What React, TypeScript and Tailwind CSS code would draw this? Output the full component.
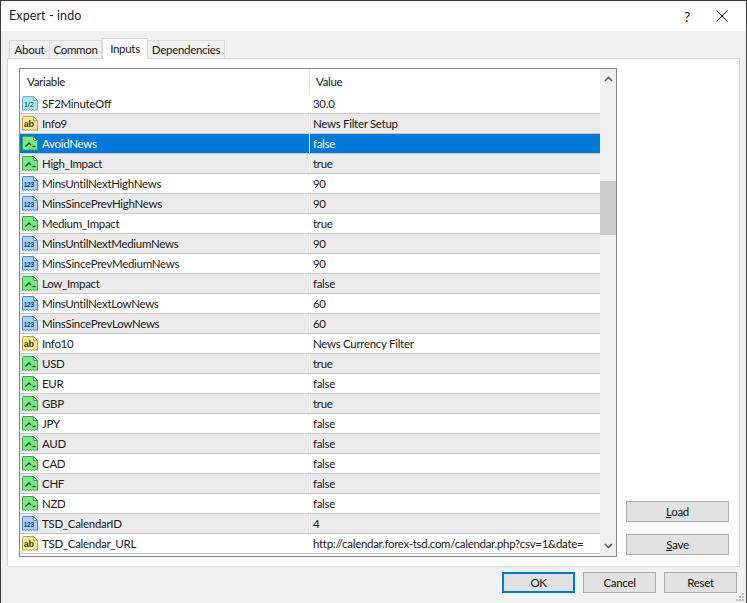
const rows: [string, string, string][] = [
  ['half', 'SF2MinuteOff', '30.0'],
  ['ab', 'Info9', 'News Filter Setup'],
  ['bool', 'AvoidNews', 'false'],
  ['bool', 'High_Impact', 'true'],
  ['num', 'MinsUntilNextHighNews', '90'],
  ['num', 'MinsSincePrevHighNews', '90'],
  ['bool', 'Medium_Impact', 'true'],
  ['num', 'MinsUntilNextMediumNews', '90'],
  ['num', 'MinsSincePrevMediumNews', '90'],
  ['bool', 'Low_Impact', 'false'],
  ['num', 'MinsUntilNextLowNews', '60'],
  ['num', 'MinsSincePrevLowNews', '60'],
  ['ab', 'Info10', 'News Currency Filter'],
  ['bool', 'USD', 'true'],
  ['bool', 'EUR', 'false'],
  ['bool', 'GBP', 'true'],
  ['bool', 'JPY', 'false'],
  ['bool', 'AUD', 'false'],
  ['bool', 'CAD', 'false'],
  ['bool', 'CHF', 'false'],
  ['bool', 'NZD', 'false'],
  ['num', 'TSD_CalendarID', '4'],
  ['ab', 'TSD_Calendar_URL', 'http://calendar.forex-tsd.com/calendar.php?csv=1&date='],
];

const iconColors: Record<string, [string, string]> = {
  half: ['#a8e6f0', '#5fb4c6'],
  ab: ['#f7e796', '#b9a64c'],
  bool: ['#7fe884', '#37a847'],
  num: ['#a9cff5', '#5288c4'],
};

function TypeIcon({ kind }: { kind: string }) {
  const [fill, stroke] = iconColors[kind];
  return (
    <svg width="17" height="17" viewBox="0 0 17 17" className="shrink-0">
      <path
        d="M0.5 2.5a1 1 0 0 1 1-1h10l4 4v10l-1.5-1-1.5 1-1.5-1-1.5 1-1.5-1-1.5 1-1.5-1-1.5 1-1.5-1-1.5 1z"
        fill={fill}
        stroke={stroke}
      />
      <path d="M11.5 1.5v4h4z" fill="#fff" stroke={stroke} />
      {kind === 'bool' && <path d="M3.5 11.5l3.5-3.5 2 2M10.5 11.5h3" fill="none" stroke="#14532d" strokeWidth="1.3" />}
      {kind === 'ab' && (
        <text x="1.8" y="12" fontSize="9" fontWeight="700" fill="#4a3f10" fontFamily="'Liberation Sans', sans-serif">
          ab
        </text>
      )}
      {kind === 'num' && (
        <text x="1.8" y="12" fontSize="6.5" fontWeight="700" fill="#123a66" fontFamily="'Liberation Sans', sans-serif">
          123
        </text>
      )}
      {kind === 'half' && (
        <text x="2" y="11.5" fontSize="7.5" fill="#124a5a" fontFamily="'Liberation Sans', sans-serif">
          1/2
        </text>
      )}
    </svg>
  );
}

function Btn({ label, className = '' }: { label: React.ReactNode; className?: string }) {
  return (
    <div className={`flex items-center justify-center bg-[#e1e1e1] border border-[#adadad] h-[21px] text-[#111] ${className}`}>
      {label}
    </div>
  );
}

export default function App() {
  return (
    <div className="w-[747px] h-[603px] bg-[#f0f0f0] border-t border-l border-r border-[#3a3a3a] flex flex-col [font-family:Lato,sans-serif] text-[11.5px] tracking-[-0.3px] text-[#1a1a1a] overflow-hidden relative">
      <div className="h-[30px] bg-white flex items-center shrink-0 pl-[8px]">
        <span className="text-[12.5px] tracking-[0.1px] flex-1">Expert - indo</span>
        <span className="w-[46px] text-center text-[14px]">?</span>
        <svg width="12" height="12" viewBox="0 0 12 12" className="mr-[18px] ml-[6px]">
          <path d="M0.5 0.5l11 11M11.5 0.5l-11 11" stroke="#111" />
        </svg>
      </div>

      {/* tabs */}
      <div className="flex items-end h-[27px] pl-[8px] shrink-0 relative z-10">
        <div className="h-[18px] w-[41px] border border-b-0 border-[#d9d9d9] bg-[#f0f0f0] flex items-center justify-center">About</div>
        <div className="h-[18px] w-[52px] border border-b-0 border-l-0 border-[#d9d9d9] bg-[#f0f0f0] flex items-center justify-center">Common</div>
        <div className="h-[21px] w-[46px] -mb-px border border-b-0 border-[#d9d9d9] bg-white flex items-start pt-[1px] justify-center">Inputs</div>
        <div className="h-[18px] w-[77px] border border-b-0 border-l-0 border-[#d9d9d9] bg-[#f0f0f0] flex items-center justify-center">Dependencies</div>
      </div>

      <div className="ml-[6px] mr-[6px] h-[509px] shrink-0 bg-white border border-[#d9d9d9] flex pl-[11px] pt-[9px]">
        <div className="w-[598px] h-[489px] border border-[#828790] flex shrink-0">
          <div className="w-[580px] flex flex-col">
            <div className="h-[25px] flex shrink-0 items-center">
              <div className="w-[290px] pl-[7px] border-r border-[#e5e5e5] h-full flex items-center">Variable</div>
              <div className="pl-[6px]">Value</div>
            </div>
            {rows.map(([kind, name, value], i) => {
              const selected = i === 2;
              const bg = selected ? 'bg-[#0078d7] text-white' : i % 2 === 1 ? 'bg-[#ebebeb]' : 'bg-white';
              return (
                <div key={name} className={`h-[20px] shrink-0 flex items-center border-b border-[#c9c9c9] ${bg}`}>
                  <div className="w-[290px] shrink-0 h-full flex items-center pl-[2px] gap-[3px] border-r border-white">
                    <TypeIcon kind={kind} />
                    <span>{name}</span>
                  </div>
                  <span className="pl-[3px] whitespace-nowrap">{value}</span>
                </div>
              );
            })}
          </div>
          <div className="w-[16px] bg-[#f0f0f0] flex flex-col items-center relative">
            <svg width="9" height="6" viewBox="0 0 9 6" className="mt-[7px]">
              <path d="M1 5l3.5-3.5L8 5" fill="none" stroke="#606060" strokeWidth="1.6" />
            </svg>
            <div className="absolute left-0 top-[112px] w-full h-[54px] bg-[#cdcdcd]" />
            <svg width="9" height="6" viewBox="0 0 9 6" className="mt-auto mb-[7px]">
              <path d="M1 1l3.5 3.5L8 1" fill="none" stroke="#606060" strokeWidth="1.6" />
            </svg>
          </div>
        </div>
        <div className="w-[103px] ml-[9px] flex flex-col justify-end gap-[12px] h-[487px]">
          <Btn label={<span><u>L</u>oad</span>} />
          <Btn label={<span><u>S</u>ave</span>} />
        </div>
      </div>

      <div className="flex justify-end gap-[8px] pr-[9px] pt-[5px]">
        <Btn label="OK" className="w-[73px] !border-2 !border-[#0078d7]" />
        <Btn label="Cancel" className="w-[73px]" />
        <Btn label="Reset" className="w-[73px]" />
      </div>

      <svg width="10" height="10" viewBox="0 0 10 10" className="absolute right-[1px] bottom-[1px]">
        <path d="M7 1h2v2H7zM4 4h2v2H4zM7 4h2v2H7zM1 7h2v2H1zM4 7h2v2H4zM7 7h2v2H7z" fill="#bdbdbd" />
      </svg>
    </div>
  );
}
